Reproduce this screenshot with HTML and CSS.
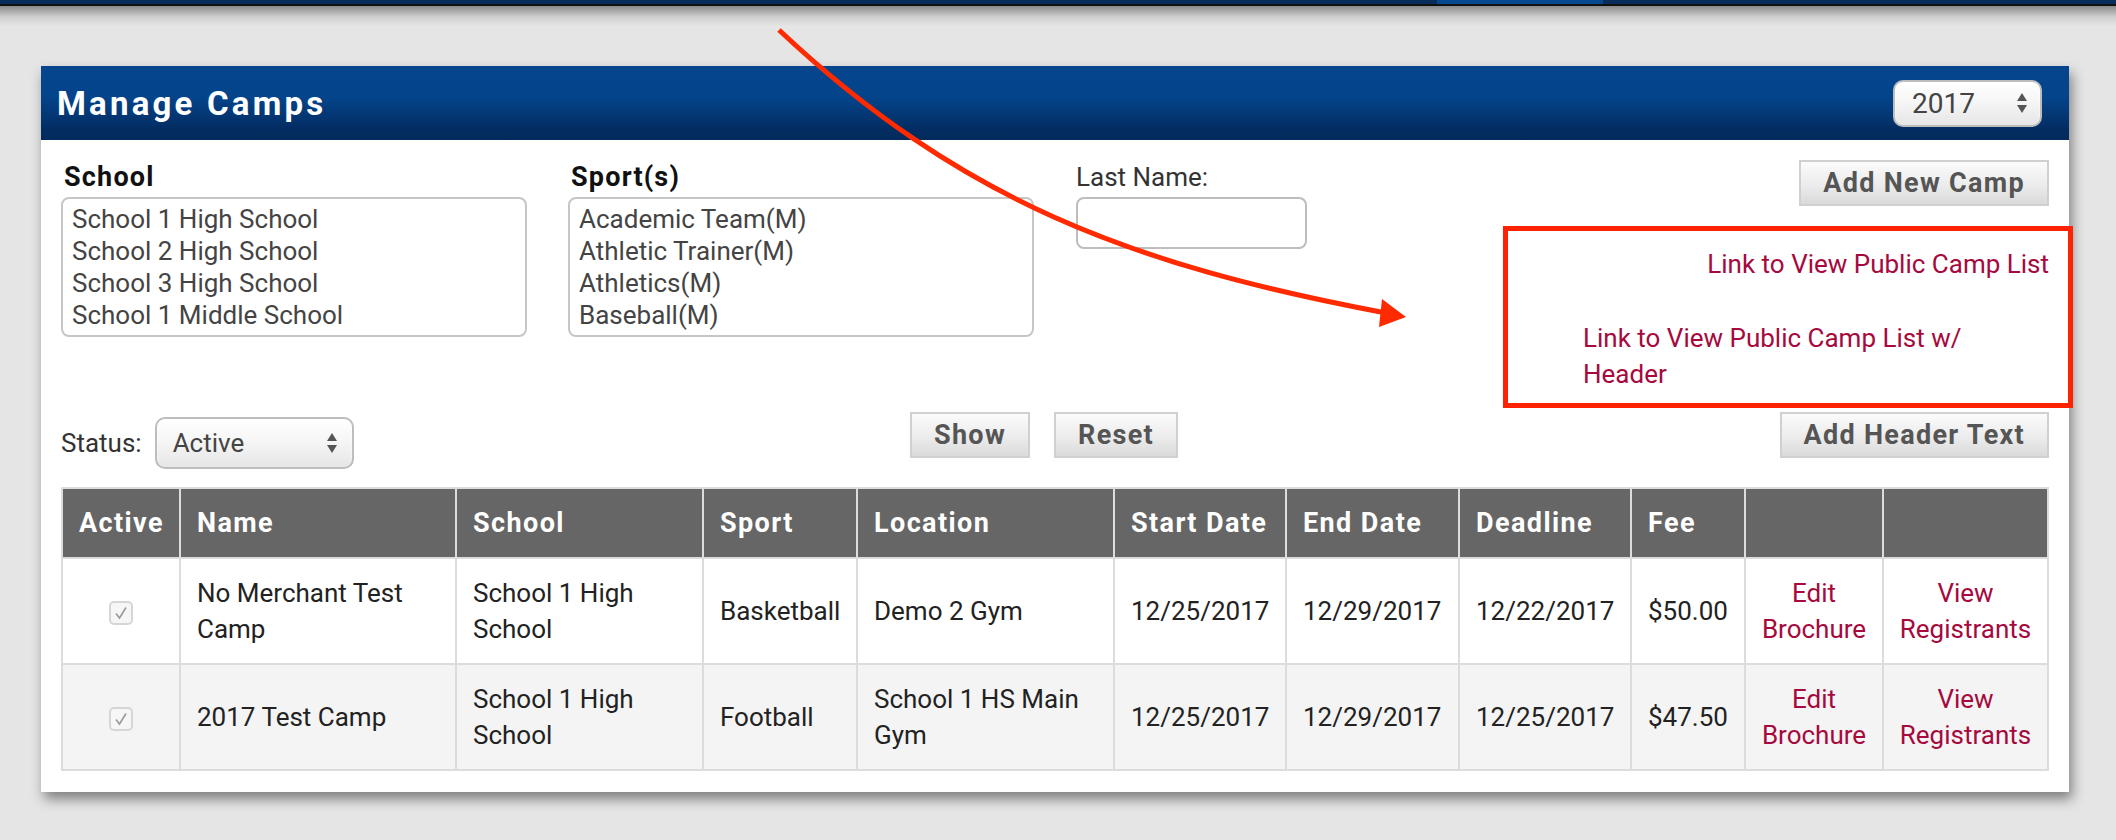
FILE: index.html
```html
<!DOCTYPE html>
<html lang="en">
<head>
<meta charset="utf-8">
<title>Manage Camps</title>
<link rel="stylesheet" href="styles.css">
</head>
<body>
<div class="topbar"><div class="topbar-tab"></div></div>
<div class="topshadow"></div>

<div class="panel">
  <div class="panel-head">
    <h1 class="title">Manage Camps</h1>
    <div class="select select-year">
      <span>2017</span>
      <svg class="updown" width="12" height="24" viewBox="0 0 12 24"><path d="M6 2 L11 10 L1 10 Z M1 14 L11 14 L6 22 Z" fill="#555"/></svg>
    </div>
  </div>

  <div class="panel-body">
    <div class="filters">
      <div class="field field-school">
        <div class="label-bold">School</div>
        <div class="listbox">
          <div>School 1 High School</div>
          <div>School 2 High School</div>
          <div>School 3 High School</div>
          <div>School 1 Middle School</div>
        </div>
      </div>
      <div class="field field-sport">
        <div class="label-bold">Sport(s)</div>
        <div class="listbox">
          <div>Academic Team(M)</div>
          <div>Athletic Trainer(M)</div>
          <div>Athletics(M)</div>
          <div>Baseball(M)</div>
        </div>
      </div>
      <div class="field field-last">
        <div class="label">Last Name:</div>
        <div class="textbox"></div>
      </div>
      <div class="right-col">
        <button class="btn">Add New Camp</button>
        <div class="links">
          <a class="link link-one">Link to View Public Camp List</a>
          <a class="link link-two">Link to View Public Camp List w/ Header</a>
        </div>
      </div>
    </div>

    <div class="actions">
      <div class="status">
        <span class="label">Status:</span>
        <div class="select select-status">
          <span>Active</span>
          <svg class="updown" width="12" height="24" viewBox="0 0 12 24"><path d="M6 2 L11 10 L1 10 Z M1 14 L11 14 L6 22 Z" fill="#555"/></svg>
        </div>
      </div>
      <div class="mid-buttons">
        <button class="btn">Show</button>
        <button class="btn">Reset</button>
      </div>
      <div class="right-buttons">
        <button class="btn">Add Header Text</button>
      </div>
    </div>

    <table class="camps">
      <colgroup>
        <col class="c-active"><col class="c-name"><col class="c-school"><col class="c-sport"><col class="c-loc">
        <col class="c-date"><col class="c-date2"><col class="c-date"><col class="c-fee"><col class="c-edit"><col class="c-view">
      </colgroup>
      <thead>
        <tr>
          <th>Active</th><th>Name</th><th>School</th><th>Sport</th><th>Location</th>
          <th>Start Date</th><th>End Date</th><th>Deadline</th><th>Fee</th><th></th><th></th>
        </tr>
      </thead>
      <tbody>
        <tr>
          <td class="center"><span class="check"><svg width="20" height="20" viewBox="0 0 20 20"><path d="M5 10.5 L8.5 15 L15 4.5" fill="none" stroke="#9a9a9a" stroke-width="1.6"/></svg></span></td>
          <td>No Merchant Test Camp</td>
          <td>School 1 High School</td>
          <td>Basketball</td>
          <td>Demo 2 Gym</td>
          <td>12/25/2017</td>
          <td>12/29/2017</td>
          <td>12/22/2017</td>
          <td>$50.00</td>
          <td class="center linkcell"><a class="link">Edit Brochure</a></td>
          <td class="center linkcell"><a class="link">View Registrants</a></td>
        </tr>
        <tr class="alt">
          <td class="center"><span class="check"><svg width="20" height="20" viewBox="0 0 20 20"><path d="M5 10.5 L8.5 15 L15 4.5" fill="none" stroke="#9a9a9a" stroke-width="1.6"/></svg></span></td>
          <td>2017 Test Camp</td>
          <td>School 1 High School</td>
          <td>Football</td>
          <td>School 1 HS Main Gym</td>
          <td>12/25/2017</td>
          <td>12/29/2017</td>
          <td>12/25/2017</td>
          <td>$47.50</td>
          <td class="center linkcell"><a class="link">Edit Brochure</a></td>
          <td class="center linkcell"><a class="link">View Registrants</a></td>
        </tr>
      </tbody>
    </table>
  </div>
</div>

<div class="annot-box"></div>
<svg class="annot-arrow" width="2116" height="840" viewBox="0 0 2116 840">
  <path d="M779 30 C 960 200, 1130 265, 1386 313" fill="none" stroke="#ff2a00" stroke-width="5"/>
  <path d="M1406 317 L1382 299 L1379 327 Z" fill="#ff2a00"/>
</svg>
</body>
</html>
```

FILE: styles.css
```css
* { box-sizing: border-box; }

body {
  margin: 0;
  background: #e5e5e5;
  font-family: Roboto, "Liberation Sans", Arial, sans-serif;
  font-size: 26px;
  color: #222;
  position: relative;
  min-height: 840px;
}

.topbar {
  height: 6px;
  background: #0a2e5c;
  border-bottom: 2px solid #111;
}
.topbar-tab {
  margin-left: 1437px;
  width: 166px;
  height: 4px;
  background: #054a91;
}
.topshadow {
  height: 20px;
  background: linear-gradient(#8a8a8a, #cfcfcf 55%, #e5e5e5);
}

.panel {
  margin: 40px 0 0 41px;
  width: 2028px;
  background: #fff;
  box-shadow: 3px 7px 12px rgba(0, 0, 0, 0.45);
}

.panel-head {
  height: 74px;
  display: flex;
  align-items: center;
  justify-content: space-between;
  padding: 0 27px 0 16px;
  background: linear-gradient(#05458e 0%, #04448b 42%, #032d62 85%, #022a5c 100%);
}
.title {
  margin: 0;
  color: #fff;
  font-size: 33px;
  font-weight: 700;
  letter-spacing: 3.2px;
}

.select {
  display: flex;
  align-items: center;
  justify-content: space-between;
  border: 2px solid #bdbdbd;
  border-radius: 10px;
  background: linear-gradient(#ffffff, #f6f6f6 45%, #e6e6e6);
  box-shadow: inset 0 2px 3px rgba(255, 255, 255, 0.9);
  color: #444;
  font-size: 26px;
}
.select-year {
  width: 149px;
  height: 47px;
  padding: 0 12px 0 17px;
  font-size: 28px;
}
.select-status {
  width: 199px;
  height: 52px;
  padding: 0 14px 0 16px;
}

.panel-body {
  padding: 21px 20px 21px 20px;
}

.filters {
  display: flex;
  align-items: flex-start;
}
.field-school { width: 466px; margin-right: 41px; }
.field-sport { width: 466px; margin-right: 42px; }
.field-last { width: 231px; }

.label-bold {
  font-weight: 700;
  font-size: 27px;
  letter-spacing: 1.2px;
  line-height: 32px;
  color: #111;
  padding-left: 3px;
  margin-bottom: 4px;
}
.label {
  font-size: 26px;
  line-height: 32px;
  color: #333;
}
.field-last .label { margin-bottom: 4px; }

.listbox {
  height: 140px;
  border: 2px solid #c6c6c6;
  border-radius: 8px;
  padding: 4px 9px;
  line-height: 32px;
  color: #444;
  overflow: hidden;
}
.textbox {
  height: 52px;
  border: 2px solid #bdbdbd;
  border-radius: 8px;
  background: #fff;
}

.right-col {
  margin-left: auto;
  margin-top: -1px;
  display: flex;
  flex-direction: column;
  align-items: flex-end;
}

.btn {
  height: 46px;
  padding: 0 22px;
  border: 2px solid #d0d0d0;
  background: linear-gradient(#fbfbfb, #ececec 55%, #dadada);
  color: #555;
  font-family: Roboto, "Liberation Sans", Arial, sans-serif;
  font-weight: 700;
  font-size: 27px;
  letter-spacing: 1.3px;
  line-height: 42px;
}

.links {
  width: 466px;
  margin-top: 40px;
  margin-bottom: 20px;
  line-height: 36px;
}
.link {
  color: #a6093d;
  text-decoration: none;
}
.link-one {
  display: block;
  text-align: right;
}
.link-two {
  display: block;
  width: 430px;
  margin-top: 38px;
}

.actions {
  display: flex;
  align-items: flex-start;
}
.status {
  flex: 1;
  display: flex;
  align-items: center;
  margin-top: 5px;
}
.status .label { margin-right: 13px; }
.mid-buttons {
  display: flex;
  gap: 24px;
  margin-right: 22px;
}
.right-buttons {
  flex: 1;
  display: flex;
  justify-content: flex-end;
}

.camps {
  margin-top: 18px;
  width: 1988px;
  table-layout: fixed;
  border-collapse: collapse;
  border: 2px solid #dcdcdc;
}
.c-active { width: 118px; }
.c-name { width: 276px; }
.c-school { width: 247px; }
.c-sport { width: 154px; }
.c-loc { width: 257px; }
.c-date { width: 172px; }
.c-date2 { width: 173px; }
.c-fee { width: 114px; }
.c-edit { width: 138px; }
.c-view { width: 165px; }

.camps th {
  height: 70px;
  background: #666;
  color: #fff;
  font-weight: 700;
  font-size: 27px;
  letter-spacing: 1.4px;
  text-align: left;
  padding: 0 6px 0 16px;
  border: 2px solid #dcdcdc;
  white-space: nowrap;
}
.camps td {
  height: 106px;
  padding: 0 10px 0 16px;
  border: 2px solid #dcdcdc;
  line-height: 36px;
  vertical-align: middle;
  color: #222;
}
.camps tr.alt td { background: #f4f4f4; }
.camps td.center { text-align: center; padding: 0 8px; }
.camps td.linkcell { padding: 0 10px; }

.check {
  display: inline-flex;
  align-items: center;
  justify-content: center;
  width: 24px;
  height: 24px;
  border: 2px solid #d6d6d6;
  border-radius: 5px;
  background: #f6f6f6;
  vertical-align: middle;
}

.annot-box {
  position: absolute;
  left: 1503px;
  top: 226px;
  width: 570px;
  height: 182px;
  border: 5px solid #ff2200;
}
.annot-arrow {
  position: absolute;
  left: 0;
  top: 0;
  pointer-events: none;
}
```
